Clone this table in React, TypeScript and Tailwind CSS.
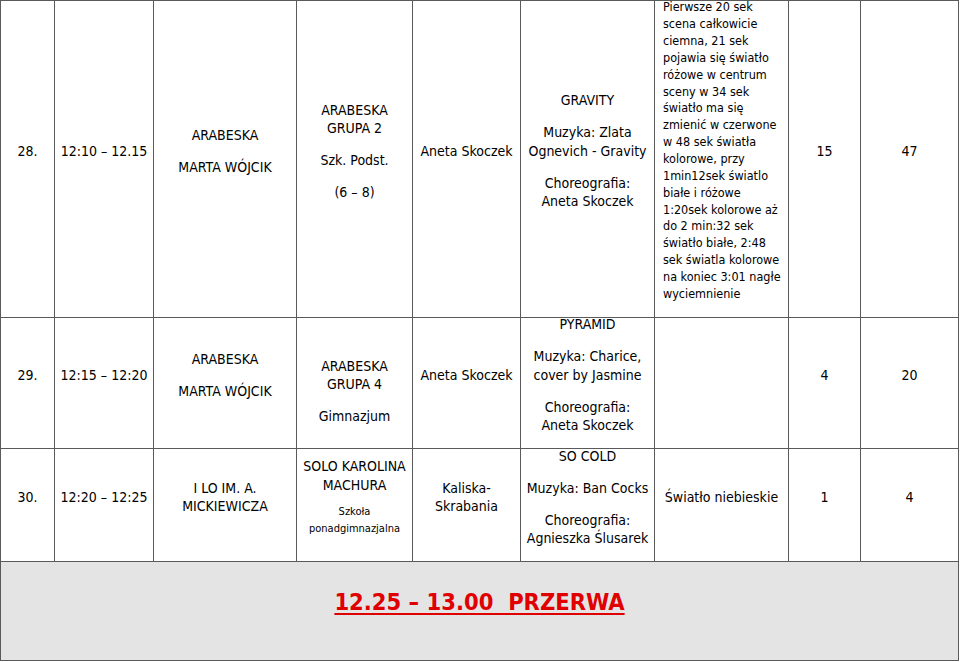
import type { ReactNode } from "react";

// schedule rows — explicit line breaks keep the wrapping of the printed sheet
function Cell({
  children,
  className = "",
}: {
  children?: ReactNode;
  className?: string;
}) {
  return (
    <div
      className={`bg-white flex flex-col items-center justify-center text-center pb-4 ${className}`}
    >
      {children}
    </div>
  );
}

function P({ children, first = false }: { children: ReactNode; first?: boolean }) {
  return (
    <p className={`whitespace-nowrap ${first ? "" : "mt-[13.5px]"}`}>{children}</p>
  );
}

const lights = [
  "Pierwsze 20 sek",
  "scena całkowicie",
  "ciemna, 21 sek",
  "pojawia się światło",
  "różowe w centrum",
  "sceny w 34 sek",
  "światło ma się",
  "zmienić w czerwone",
  "w 48 sek światła",
  "kolorowe, przy",
  "1min12sek światlo",
  "białe i różowe",
  "1:20sek kolorowe aż",
  "do 2 min:32 sek",
  "światło białe, 2:48",
  "sek światla kolorowe",
  "na koniec 3:01 nagłe",
  "wyciemnienie",
];

export default function App() {
  return (
    <div className="w-[960px] h-[662px] bg-white text-black font-['DejaVu_Sans_Condensed','DejaVu_Sans',sans-serif] font-stretch-condensed text-[14px] leading-[18.5px]">
      <div className="grid w-[959px] gap-px border border-[#5a5a5a] bg-[#5a5a5a] grid-cols-[53px_98px_142px_115px_107px_133px_133px_71px_97px] grid-rows-[316px_130px_112px_98px]">
        {/* 28 */}
        <Cell>28.</Cell>
        <Cell>12:10 – 12.15</Cell>
        <Cell>
          <P first>ARABESKA</P>
          <P>MARTA WÓJCIK</P>
        </Cell>
        <Cell>
          <P first>
            ARABESKA
            <br />
            GRUPA 2
          </P>
          <P>Szk. Podst.</P>
          <P>(6 – 8)</P>
        </Cell>
        <Cell>Aneta Skoczek</Cell>
        <Cell>
          <P first>GRAVITY</P>
          <P>
            Muzyka: Zlata
            <br />
            Ognevich - Gravity
          </P>
          <P>
            Choreografia:
            <br />
            Aneta Skoczek
          </P>
        </Cell>
        <Cell className="!items-start !text-left pl-2 text-[12.5px] leading-[16.86px]">
          {lights.map((l) => (
            <span key={l} className="whitespace-nowrap">
              {l}
            </span>
          ))}
        </Cell>
        <Cell>15</Cell>
        <Cell>47</Cell>

        {/* 29 */}
        <Cell>29.</Cell>
        <Cell>12:15 – 12:20</Cell>
        <Cell>
          <P first>ARABESKA</P>
          <P>MARTA WÓJCIK</P>
        </Cell>
        <Cell className="!pb-0 pt-4">
          <P first>
            ARABESKA
            <br />
            GRUPA 4
          </P>
          <P>Gimnazjum</P>
        </Cell>
        <Cell>Aneta Skoczek</Cell>
        <Cell>
          <P first>PYRAMID</P>
          <P>
            Muzyka: Charice,
            <br />
            cover by Jasmine
          </P>
          <P>
            Choreografia:
            <br />
            Aneta Skoczek
          </P>
        </Cell>
        <Cell />
        <Cell>4</Cell>
        <Cell>20</Cell>

        {/* 30 */}
        <Cell>30.</Cell>
        <Cell>12:20 – 12:25</Cell>
        <Cell>
          <P first>
            I LO IM. A.
            <br />
            MICKIEWICZA
          </P>
        </Cell>
        <Cell>
          <P first>
            SOLO KAROLINA
            <br />
            MACHURA
          </P>
          <p className="mt-[9px] text-[11px] leading-[17px] whitespace-nowrap">
            Szkoła
            <br />
            ponadgimnazjalna
          </p>
        </Cell>
        <Cell>
          <P first>
            Kaliska-
            <br />
            Skrabania
          </P>
        </Cell>
        <Cell>
          <P first>SO COLD</P>
          <P>Muzyka: Ban Cocks</P>
          <P>
            Choreografia:
            <br />
            Agnieszka Ślusarek
          </P>
        </Cell>
        <Cell>Światło niebieskie</Cell>
        <Cell>1</Cell>
        <Cell>4</Cell>

        {/* PRZERWA */}
        <div className="col-span-9 bg-[#e4e4e4] flex items-start justify-center pt-[24px]">
          <span className="text-[#e00000] font-bold text-[23.5px] leading-[32px] underline decoration-2 underline-offset-[3px] whitespace-pre">
            12.25 – 13.00  PRZERWA
          </span>
        </div>
      </div>
    </div>
  );
}
